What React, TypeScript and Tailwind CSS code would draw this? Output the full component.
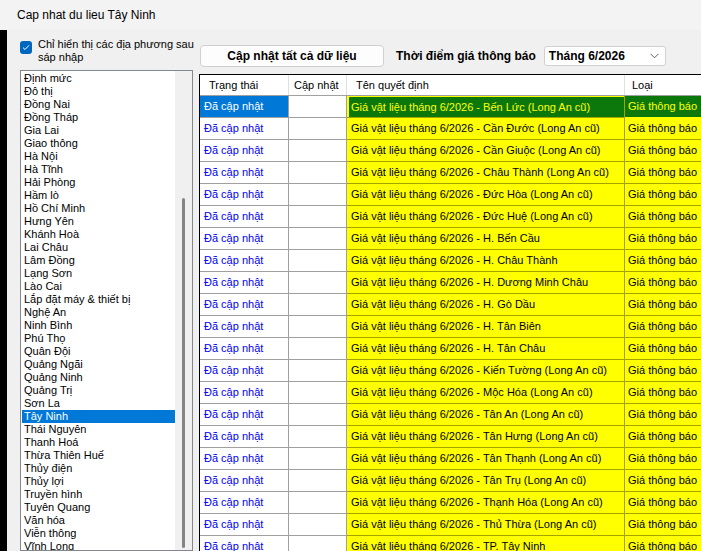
const places = [
  "Định mức",
  "Đô thị",
  "Đồng Nai",
  "Đồng Tháp",
  "Gia Lai",
  "Giao thông",
  "Hà Nội",
  "Hà Tĩnh",
  "Hải Phòng",
  "Hầm lò",
  "Hồ Chí Minh",
  "Hưng Yên",
  "Khánh Hoà",
  "Lai Châu",
  "Lâm Đồng",
  "Lạng Sơn",
  "Lào Cai",
  "Lắp đặt máy & thiết bị",
  "Nghệ An",
  "Ninh Bình",
  "Phú Thọ",
  "Quân Đội",
  "Quảng Ngãi",
  "Quảng Ninh",
  "Quảng Trị",
  "Sơn La",
  "Tây Ninh",
  "Thái Nguyên",
  "Thanh Hoá",
  "Thừa Thiên Huế",
  "Thủy điện",
  "Thủy lợi",
  "Truyền hình",
  "Tuyên Quang",
  "Văn hóa",
  "Viễn thông",
  "Vĩnh Long",
];

const decisions = [
  "Bến Lức (Long An cũ)",
  "Cần Đước (Long An cũ)",
  "Cần Giuộc (Long An cũ)",
  "Châu Thành (Long An cũ)",
  "Đức Hòa (Long An cũ)",
  "Đức Huệ (Long An cũ)",
  "H. Bến Cầu",
  "H. Châu Thành",
  "H. Dương Minh Châu",
  "H. Gò Dầu",
  "H. Tân Biên",
  "H. Tân Châu",
  "Kiến Tường (Long An cũ)",
  "Mộc Hóa (Long An cũ)",
  "Tân An (Long An cũ)",
  "Tân Hưng (Long An cũ)",
  "Tân Thạnh (Long An cũ)",
  "Tân Trụ (Long An cũ)",
  "Thạnh Hóa (Long An cũ)",
  "Thủ Thừa (Long An cũ)",
  "TP. Tây Ninh",
];

function PlaceList() {
  return (
    <div className="flex-1 flex border border-[#828790] bg-white overflow-hidden">
      <div className="flex-1 pt-px pl-px">
        {places.map((p) =>
          p === "Tây Ninh" ? (
            <div key={p} className="h-[13px] leading-[13px] px-[2px] bg-[#0078d7] text-white">
              {p}
            </div>
          ) : (
            <div key={p} className="h-[13px] leading-[13px] px-[2px] text-black">
              {p}
            </div>
          )
        )}
      </div>
      <div className="w-[17px] bg-[#f0f0f0] flex justify-center pt-[127px]">
        <div className="w-[3px] h-[350px] bg-[#858585] rounded-full" />
      </div>
    </div>
  );
}

function Grid() {
  return (
    <div className="flex-1 border-t border-l border-black bg-[#f0f0f0] overflow-hidden text-[11px]">
      <div className="flex h-[21px] leading-[20px] bg-white border-b border-[#a0a0a0] whitespace-nowrap">
        <div className="w-[89px] pl-[9px] border-r border-[#e0e0e0]">Trạng thái</div>
        <div className="w-[58px] pl-[5px] border-r border-[#e0e0e0]">Cập nhật</div>
        <div className="w-[278px] pl-[9px] border-r border-[#e0e0e0]">Tên quyết định</div>
        <div className="flex-1 pl-[7px]">Loại</div>
      </div>
      {decisions.map((d, i) => {
        const sel = i === 0;
        return (
          <div key={d} className="flex h-[22px] leading-[21px] whitespace-nowrap">
            <div
              className={
                sel
                  ? "w-[89px] pl-[4px] bg-[#0078d7] text-white border-r border-b border-[#a0a0a0]"
                  : "w-[89px] pl-[4px] bg-white text-[#0000ff] border-r border-b border-[#a0a0a0]"
              }
            >
              Đã cập nhật
            </div>
            <div className="w-[58px] bg-white border-r border-b border-[#a0a0a0]" />
            <div
              className={
                sel
                  ? "w-[278px] bg-[#ffff00] border-r border-b border-[#a4a400] overflow-hidden"
                  : "w-[278px] pl-[4px] bg-[#ffff00] text-black border-r border-b border-[#a4a400] overflow-hidden"
              }
            >
              {sel ? (
                <div className="h-[21px] bg-[#0c780c] text-[#ffff00] pl-[2px] border-l-2 border-t border-[#ffff00] leading-[20px]">
                  Giá vật liệu tháng 6/2026 - {d}
                </div>
              ) : (
                <>Giá vật liệu tháng 6/2026 - {d}</>
              )}
            </div>
            <div
              className={
                sel
                  ? "flex-1 pl-[3px] bg-[#0c780c] text-[#ffff00] border-b border-[#ffff00]"
                  : "flex-1 pl-[3px] bg-[#ffff00] text-black border-b border-[#a4a400]"
              }
            >
              Giá thông báo
            </div>
          </div>
        );
      })}
    </div>
  );
}

export default function App() {
  return (
    <div
      className="w-[701px] h-[551px] overflow-hidden bg-[#f0f0f0] flex flex-col text-black"
      style={{ fontFamily: '"Liberation Sans", Arial, sans-serif' }}
    >
      <div className="h-[30px] shrink-0 bg-[#f3f3f3] pl-[17px] flex items-center text-[12px]">
        Cap nhat du lieu Tây Ninh
      </div>
      <div className="flex-1 flex min-h-0">
        <div className="w-[7px] bg-black" />
        <div className="w-[192px] pl-[13px] pr-[6px] flex flex-col">
          <div className="h-[40px] flex items-start pt-[11px] gap-[6px] text-[11px] leading-[13px]">
            <div className="w-[12px] h-[13px] shrink-0 rounded-[3px] bg-[#0067c0] flex items-center justify-center">
              <svg width="8" height="7" viewBox="0 0 8 7" fill="none">
                <path d="M1 3.6 L3 5.5 L7 1.3" stroke="white" strokeWidth="1" />
              </svg>
            </div>
            <div className="-mt-[3px] whitespace-nowrap">
              Chỉ hiển thị các địa phương sau
              <br />
              sáp nhập
            </div>
          </div>
          <div className="flex-1 flex flex-col text-[11px] min-h-0">
            <PlaceList />
          </div>
        </div>
        <div className="flex-1 flex flex-col min-w-0">
          <div className="h-[44px] flex items-start pt-[15px] pl-px text-[12px] font-bold">
            <div className="w-[184px] h-[22px] bg-[#fdfdfd] border border-[#d0d0d0] rounded-[4px] flex items-center justify-center">
              Cập nhật tất cả dữ liệu
            </div>
            <div className="ml-[12px] h-[22px] flex items-center">Thời điểm giá thông báo</div>
            <div className="ml-[8px] mt-px w-[122px] h-[20px] bg-white border border-[#d0d0d0] rounded-[3px] flex items-center justify-between pl-[4px] pr-[6px]">
              <span>Tháng 6/2026</span>
              <svg width="9" height="6" viewBox="0 0 9 6" fill="none">
                <path d="M0.5 0.8 L4.5 4.8 L8.5 0.8" stroke="#606060" strokeWidth="1" />
              </svg>
            </div>
          </div>
          <Grid />
        </div>
      </div>
    </div>
  );
}
